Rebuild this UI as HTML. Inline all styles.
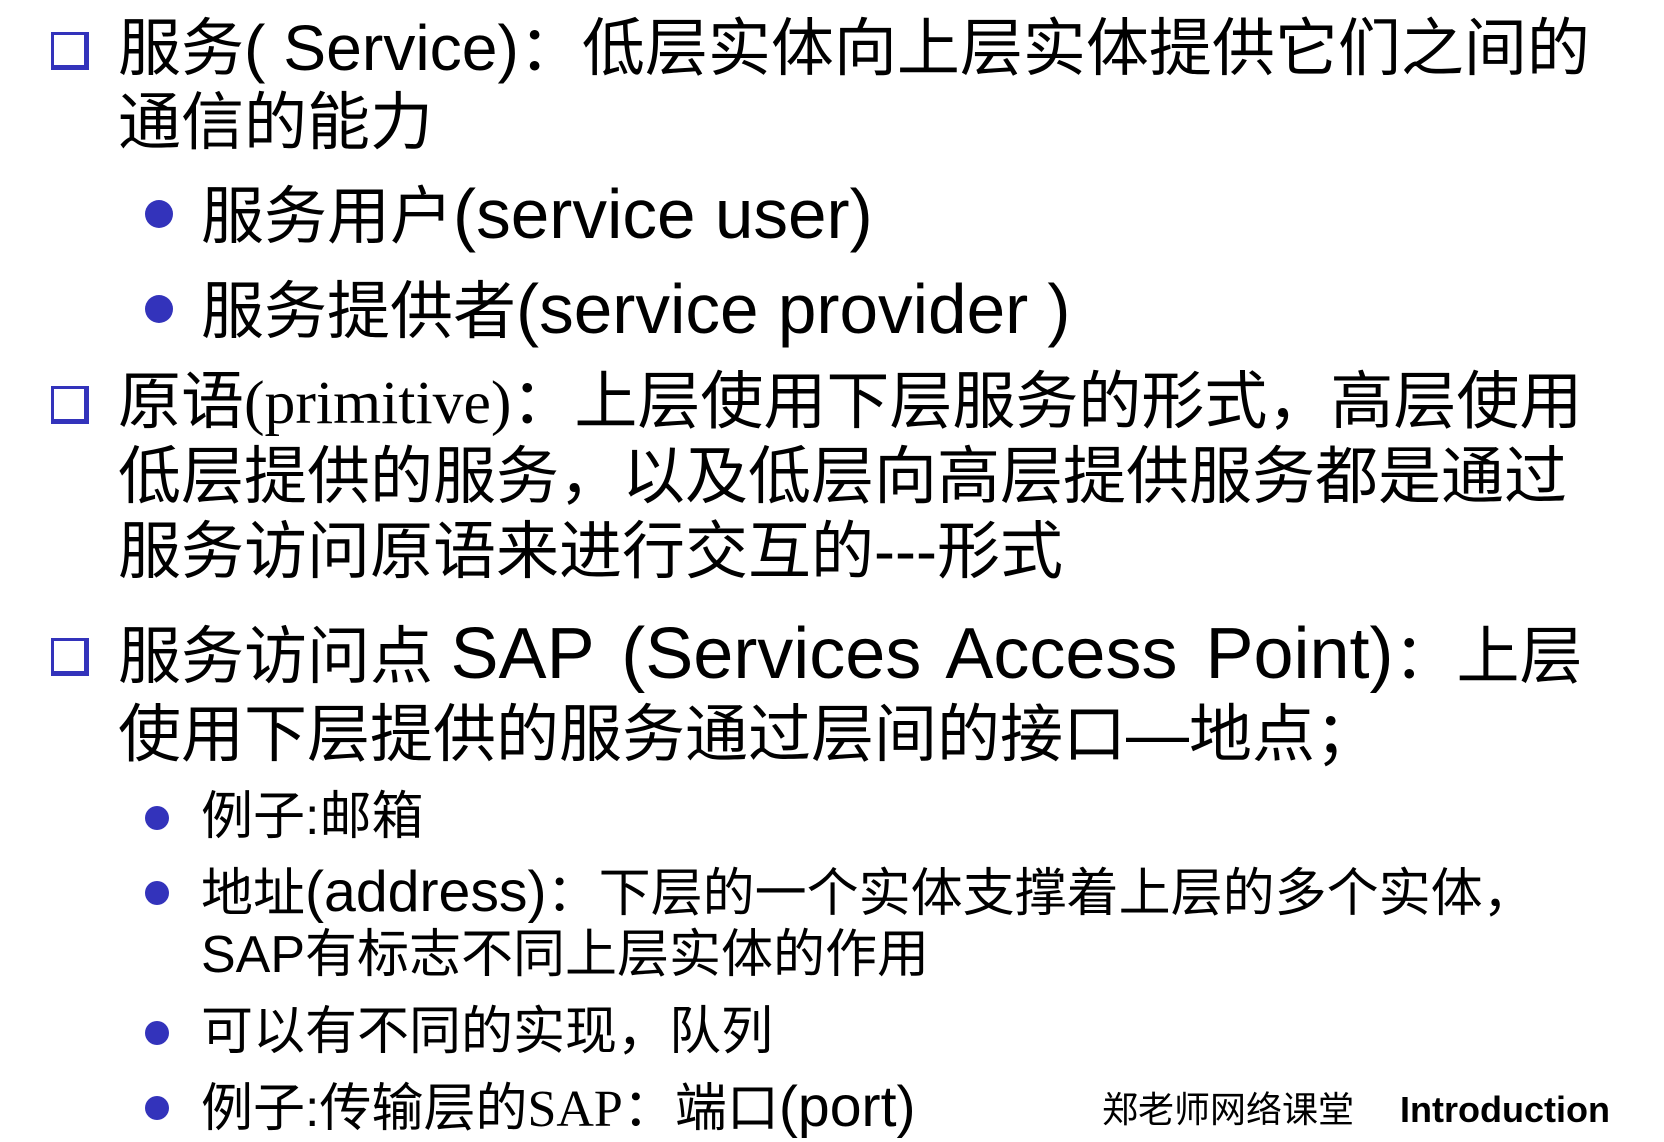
<!DOCTYPE html>
<html><head><meta charset="utf-8"><style>
body{margin:0;width:1664px;height:1142px;background:#fff;position:relative;overflow:hidden;font-family:"Liberation Sans","Noto Sans CJK SC",sans-serif;color:#000}
.l{position:absolute;white-space:nowrap;height:70px;line-height:70px;font-size:63px}
.s{font-size:52px;height:60px;line-height:60px}
.box{position:absolute;left:51px;width:30px;height:30px;border:3px solid #3333bb;border-right-width:5px;border-bottom-width:5px;background:#fff}
.dot{position:absolute;border-radius:50%;background:#3333bb}
.lt{font-size:1.1em}
</style></head><body>
<div class="box" style="top:32px"></div>
<div class="l" style="left:118px;top:13px">服务<span style="font-size:1.02em">( Service)</span>：低层实体向上层实体提供它们之间的</div>
<div class="l" style="left:118px;top:88px">通信的能力</div>
<div class="dot" style="left:145px;top:200px;width:28px;height:28px"></div>
<div class="l" style="left:201px;top:179px">服务用户<span class="lt">(service user)</span></div>
<div class="dot" style="left:145px;top:295px;width:28px;height:28px"></div>
<div class="l" style="left:201px;top:274px">服务提供者<span class="lt">(service provider )</span></div>
<div class="box" style="top:386px"></div>
<div class="l" style="left:118px;top:367px">原语<span style="font-family:'Liberation Serif',serif;font-size:0.98em">(primitive)</span>：上层使用下层服务的形式，高层使用</div>
<div class="l" style="left:118px;top:442px">低层提供的服务，以及低层向高层提供服务都是通过</div>
<div class="l" style="left:118px;top:517px">服务访问原语来进行交互的---形式</div>
<div class="box" style="top:638px"></div>
<div class="l" style="left:118px;top:619px">服务访问点 <span style="font-size:72px;word-spacing:8px">SAP (Services Access Point)</span>：上层</div>
<div class="l" style="left:118px;top:700px">使用下层提供的服务通过层间的接口—地点；</div>
<div class="dot" style="left:145px;top:806px;width:24px;height:24px"></div>
<div class="l s" style="left:201px;top:787px">例子:邮箱</div>
<div class="dot" style="left:145px;top:881px;width:24px;height:24px"></div>
<div class="l s" style="left:201px;top:862px">地址<span class="lt">(address)</span>：下层的一个实体支撑着上层的多个实体，</div>
<div class="l s" style="left:201px;top:925px">SAP有标志不同上层实体的作用</div>
<div class="dot" style="left:145px;top:1021px;width:24px;height:24px"></div>
<div class="l s" style="left:201px;top:1002px">可以有不同的实现，队列</div>
<div class="dot" style="left:145px;top:1096px;width:24px;height:24px"></div>
<div class="l s" style="left:201px;top:1077px">例子:传输层的<span style="font-family:'Liberation Serif',serif">SAP</span>：端口<span class="lt">(port)</span></div>
<div class="l" style="left:1102px;top:1090px;font-size:36px;height:40px;line-height:40px">郑老师网络课堂</div>
<div class="l" style="left:1400px;top:1090px;font-size:36px;height:40px;line-height:40px;font-weight:bold">Introduction</div>
</body></html>
